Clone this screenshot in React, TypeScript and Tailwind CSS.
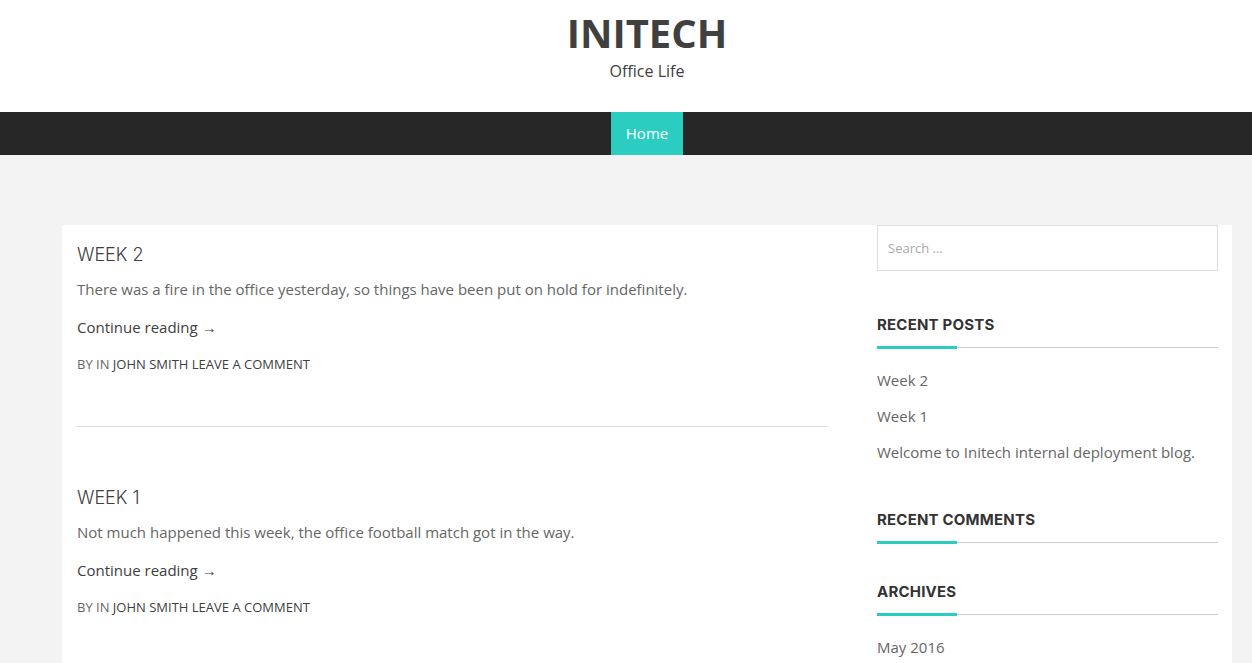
import React from 'react';

const posts = [
  {
    title: 'Week 2',
    excerpt: 'There was a fire in the office yesterday, so things have been put on hold for indefinitely.',
  },
  {
    title: 'Week 1',
    excerpt: 'Not much happened this week, the office football match got in the way.',
  },
];

const WidgetTitle: React.FC<{ children: React.ReactNode }> = ({ children }) => (
  <div className="mb-[19px]">
    <h3 className="font-['Inter',sans-serif] text-[15px] font-bold uppercase leading-[20px] text-[#333] tracking-[0.2px]">
      {children}
    </h3>
    <div className="relative mt-[11px] h-[3px]">
      <div className="absolute left-0 right-0 top-[1px] h-px bg-[#cccccc]" />
      <div className="absolute left-0 top-0 h-[3px] w-[80px] bg-[#2bcdc1]" />
    </div>
  </div>
);

export default function App() {
  return (
    <div className="h-screen overflow-hidden bg-[#f3f3f3] font-['Open_Sans',sans-serif] text-[#404040]">
      <div className="w-[1294px]">
        <header className="flex h-[112px] flex-col items-center bg-white pt-[10px]">
          <h1 className="text-[40px] font-bold leading-[46px] text-[#404040]">INITECH</h1>
          <p className="mt-[3px] text-[16px] leading-[24px] text-[#404040]">Office Life</p>
        </header>

        <nav className="flex h-[43px] justify-center bg-[#272727]">
          <a className="flex h-full items-center bg-[#2bcdc1] px-[15px] text-[15px] text-white">Home</a>
        </nav>

        <div className="mx-auto mt-[70px] flex min-h-[480px] w-[1170px] bg-white">
          <main className="w-[780px] px-[15px] pt-[17px]">
            {posts.map((p, i) => (
              <article key={p.title}>
                {i > 0 && <div className="mb-[58px] mt-[52px] h-px bg-[#dddddd]" />}
                <h2 className="font-['Inter',sans-serif] text-[18px] font-light uppercase leading-[26px] text-[#404040]">
                  {p.title}
                </h2>
                <p className="mt-[9px] text-[15px] leading-[24px] text-[#666666]">{p.excerpt}</p>
                <a className="mt-[14px] block text-[15px] leading-[24px] text-[#404040]">
                  Continue reading <span className="font-['Liberation_Sans',sans-serif]">→</span>
                </a>
                <div className="mt-[14px] text-[13px] uppercase leading-[20px] text-[#666666]">
                  By In <span className="text-[#404040]">John Smith</span>{' '}
                  <span className="text-[#404040]">Leave a comment</span>
                </div>
              </article>
            ))}
          </main>

          <aside className="ml-[35px] w-[341px]">
            <input
              type="search"
              placeholder="Search …"
              className="h-[46px] w-full border border-[#dddddd] px-[10px] text-[13px] text-[#404040] placeholder:text-[#aaaaaa] outline-none"
            />

            <section className="mt-[44px]">
              <WidgetTitle>Recent Posts</WidgetTitle>
              <ul className="flex flex-col gap-[12px] text-[15px] leading-[24px] text-[#666666]">
                <li>Week 2</li>
                <li>Week 1</li>
                <li>Welcome to Initech internal deployment blog.</li>
              </ul>
            </section>

            <section className="mt-[46px]">
              <WidgetTitle>Recent Comments</WidgetTitle>
            </section>

            <section className="mt-[38px]">
              <WidgetTitle>Archives</WidgetTitle>
              <ul className="text-[15px] leading-[24px] text-[#666666]">
                <li>May 2016</li>
              </ul>
            </section>
          </aside>
        </div>
      </div>
    </div>
  );
}
